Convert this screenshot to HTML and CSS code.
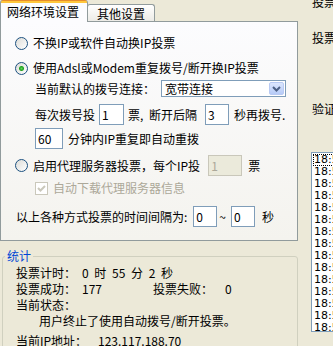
FILE: index.html
```html
<!DOCTYPE html>
<html lang="zh-CN">
<head>
    <meta charset="UTF-8">
    <title>投票设置</title>
    <link rel="stylesheet" href="styles.css">
</head>
<body>
    <div class="window">
        <div class="left">
            <div class="tabs">
                <div class="tab active">网络环境设置</div>
                <div class="tab">其他设置</div>
            </div>

            <div class="panel">
                <div class="row opt first">
                    <span class="radio"></span>
                    <span class="label">不换IP或软件自动换IP投票</span>
                </div>
                <div class="row opt second">
                    <span class="radio checked"></span>
                    <span class="label">使用Adsl或Modem重复拨号/断开换IP投票</span>
                </div>
                <div class="row sub dial">
                    <span>当前默认的拨号连接：</span>
                    <div class="combo">
                        <span class="combo-text">宽带连接</span>
                        <span class="combo-btn">
                            <svg width="9" height="6" viewBox="0 0 9 6" fill="none" stroke="#4d6185" stroke-width="2">
                                <polyline points="1 1 4.5 4.5 8 1"></polyline>
                            </svg>
                        </span>
                    </div>
                </div>
                <div class="row sub votes">
                    <span>每次拨号投</span>
                    <input type="text" class="field n1" value="1">
                    <span>票, 断开后隔</span>
                    <input type="text" class="field n3" value="3">
                    <span>秒再拨号.</span>
                </div>
                <div class="row sub redial">
                    <input type="text" class="field n60" value="60">
                    <span>分钟内IP重复即自动重拨</span>
                </div>
                <div class="row opt proxy">
                    <span class="radio"></span>
                    <span class="label">启用代理服务器投票，每个IP投</span>
                    <input type="text" class="field per-ip" value="1" disabled>
                    <span>票</span>
                </div>
                <div class="row sub download">
                    <span class="check">
                        <svg width="11" height="11" viewBox="0 0 11 11" fill="none" stroke="#cac8bb" stroke-width="2">
                            <polyline points="2 5 4.5 7.5 9 3"></polyline>
                        </svg>
                    </span>
                    <span class="disabled-text">自动下载代理服务器信息</span>
                </div>
                <div class="row interval">
                    <span>以上各种方式投票的时间间隔为:</span>
                    <input type="text" class="field t-from" value="0">
                    <span class="tilde">~</span>
                    <input type="text" class="field t-to" value="0">
                    <span class="sec">秒</span>
                </div>
            </div>

            <fieldset class="stats">
                <legend>统计</legend>
                <div class="stat">
                    <span class="key">投票计时：</span>
                    <span>0 时 55 分 2 秒</span>
                </div>
                <div class="stat">
                    <span class="key">投票成功：</span>
                    <span class="val">177</span>
                    <span class="key fail">投票失败：</span>
                    <span>0</span>
                </div>
                <div class="stat">
                    <span>当前状态：</span>
                </div>
                <div class="stat status">
                    <span>用户终止了使用自动拨号/断开投票。</span>
                </div>
                <div class="stat ip">
                    <span class="key">当前IP地址：</span>
                    <span>123.117.188.70</span>
                </div>
            </fieldset>
        </div>

        <div class="right">
            <div class="side-label one">投票</div>
            <div class="side-label two">投票</div>
            <div class="side-label three">验证</div>
            <div class="log">
                <div class="log-item focus">18:55:02</div>
                <div class="log-item">18:54:51</div>
                <div class="log-item">18:54:40</div>
                <div class="log-item">18:54:29</div>
                <div class="log-item">18:54:18</div>
                <div class="log-item">18:54:07</div>
                <div class="log-item">18:53:56</div>
                <div class="log-item">18:53:45</div>
                <div class="log-item">18:53:34</div>
                <div class="log-item">18:53:23</div>
                <div class="log-item">18:53:12</div>
                <div class="log-item">18:53:01</div>
                <div class="log-item">18:52:50</div>
                <div class="log-item">18:52:39</div>
                <div class="log-item">18:52:28</div>
            </div>
        </div>
    </div>
</body>
</html>
```

FILE: styles.css
```css
* {
    box-sizing: border-box;
}

body {
    margin: 0;
    width: 333px;
    height: 346px;
    overflow: hidden;
    background-color: #ece9d8;
    font-family: "Noto Sans CJK SC", sans-serif;
    font-size: 12px;
    line-height: 14px;
    word-spacing: 3px;
    color: #000;
}

.window {
    display: flex;
}

.left {
    width: 298px;
    flex: none;
}

/* tabs */
.tabs {
    display: flex;
    align-items: flex-end;
    height: 21px;
}

.tab {
    height: 17px;
    margin-left: -1px;
    padding: 1px 9px 0;
    border: 1px solid #919b9c;
    border-bottom: none;
    border-radius: 3px 3px 0 0;
    background: linear-gradient(#ffffff, #ecebe6);
    line-height: 15px;
}

.tab.active {
    position: relative;
    z-index: 1;
    height: 22px;
    margin-left: 0;
    margin-bottom: -1px;
    padding: 3px 8px 0 6px;
    border-top: none;
    background: linear-gradient(#e68b2c 0, #e68b2c 1px, #ffc73c 1px, #ffc73c 3px, #fcfcfe 3px);
    line-height: 18px;
}

.panel {
    height: 220px;
    border: 1px solid #919b9c;
    background: linear-gradient(#fcfcfe, #f4f3ee);
    padding: 14px 0 0 14px;
}

.row {
    display: flex;
    align-items: center;
    white-space: nowrap;
}

.row.sub {
    padding-left: 20px;
}

.row.second {
    margin-top: 11px;
}

.row.dial {
    margin-top: 5px;
}

.row.votes {
    margin-top: 7px;
}

.row.redial {
    margin-top: 3px;
}

.row.proxy {
    margin-top: 6px;
}

.row.download {
    margin-top: 5px;
}

.row.interval {
    margin-top: 11px;
    padding-left: 1px;
}

.radio {
    flex: none;
    width: 13px;
    height: 13px;
    margin-right: 5px;
    border: 1px solid #1c5180;
    border-radius: 50%;
    background: linear-gradient(135deg, #dcdcd7, #ffffff);
}

.radio.checked {
    background: radial-gradient(circle, #5fd75b 0, #21a121 2px, transparent 3px),
        linear-gradient(135deg, #dcdcd7, #ffffff);
}

.check {
    flex: none;
    display: flex;
    align-items: center;
    justify-content: center;
    width: 13px;
    height: 13px;
    margin-right: 5px;
    border: 1px solid #cac8bb;
    background-color: #ffffff;
}

.disabled-text {
    color: #aca899;
}

/* combo box */
.combo {
    display: flex;
    align-items: center;
    width: 125px;
    height: 17px;
    margin-left: 6px;
    padding: 1px;
    border: 1px solid #7f9db9;
    background-color: #ffffff;
}

.combo-text {
    flex: 1;
    padding-left: 2px;
}

.combo-btn {
    display: flex;
    align-items: center;
    justify-content: center;
    width: 15px;
    height: 13px;
    border: 1px solid #b9caf3;
    border-radius: 2px;
    background: linear-gradient(#dce6fd, #b6cbf7);
}

/* text fields */
.field {
    height: 21px;
    padding: 0 2px;
    border: 1px solid #7f9db9;
    background-color: #ffffff;
    font-family: "Noto Sans CJK SC", sans-serif;
    font-size: 12px;
    color: #000;
}

.field.n1 {
    width: 25px;
    margin: 0 4px;
}

.field.n3 {
    width: 24px;
    margin: 0 5px 0 8px;
}

.field.n60 {
    width: 28px;
    margin-right: 5px;
}

.field.per-ip {
    width: 34px;
    margin: 0 6px 0 8px;
    border-color: #c9c7ba;
    background-color: #ebeadb;
    color: #aca899;
}

.field.t-from {
    width: 24px;
    margin-left: 6px;
}

.field.t-to {
    width: 24px;
    margin-left: 5px;
}

.tilde {
    margin-left: 2px;
}

.sec {
    margin-left: 7px;
}

/* statistics */
.stats {
    width: 296px;
    height: 120px;
    margin: 8px 0 0 2px;
    padding: 0 0 0 2px;
    border: 1px solid #d0d0bf;
    border-radius: 3px;
}

.stats legend {
    padding: 0 2px;
    color: #0046d5;
    line-height: 14px;
}

.stat {
    display: flex;
    margin-left: 11px;
    line-height: 16px;
    white-space: nowrap;
}

.stat:first-of-type {
    margin-top: 2px;
}

.stat .key {
    width: 66px;
}

.stat .val {
    width: 71px;
}

.stat .fail {
    width: 72px;
}

.stat.status {
    padding-left: 23px;
}

.stat.ip {
    margin-top: 4px;
}

.stat.ip .key {
    width: 82px;
}

/* right column */
.right {
    width: 35px;
    flex: none;
}

.side-label {
    padding-left: 14px;
    white-space: nowrap;
}

.side-label.one {
    margin-top: -5px;
}

.side-label.two {
    margin-top: 22px;
}

.side-label.three {
    margin-top: 57px;
}

.log {
    width: 60px;
    height: 180px;
    margin: 36px 0 0 13px;
    padding: 1px 0 0 1px;
    border: 1px solid #7f9db9;
    background-color: #ffffff;
    font-family: "DejaVu Sans", sans-serif;
    font-size: 11px;
    overflow: hidden;
}

.log-item {
    height: 12px;
    padding-left: 1px;
    line-height: 12px;
    white-space: nowrap;
}

.log-item.focus {
    outline: 1px dotted #000;
    outline-offset: -1px;
}
```
